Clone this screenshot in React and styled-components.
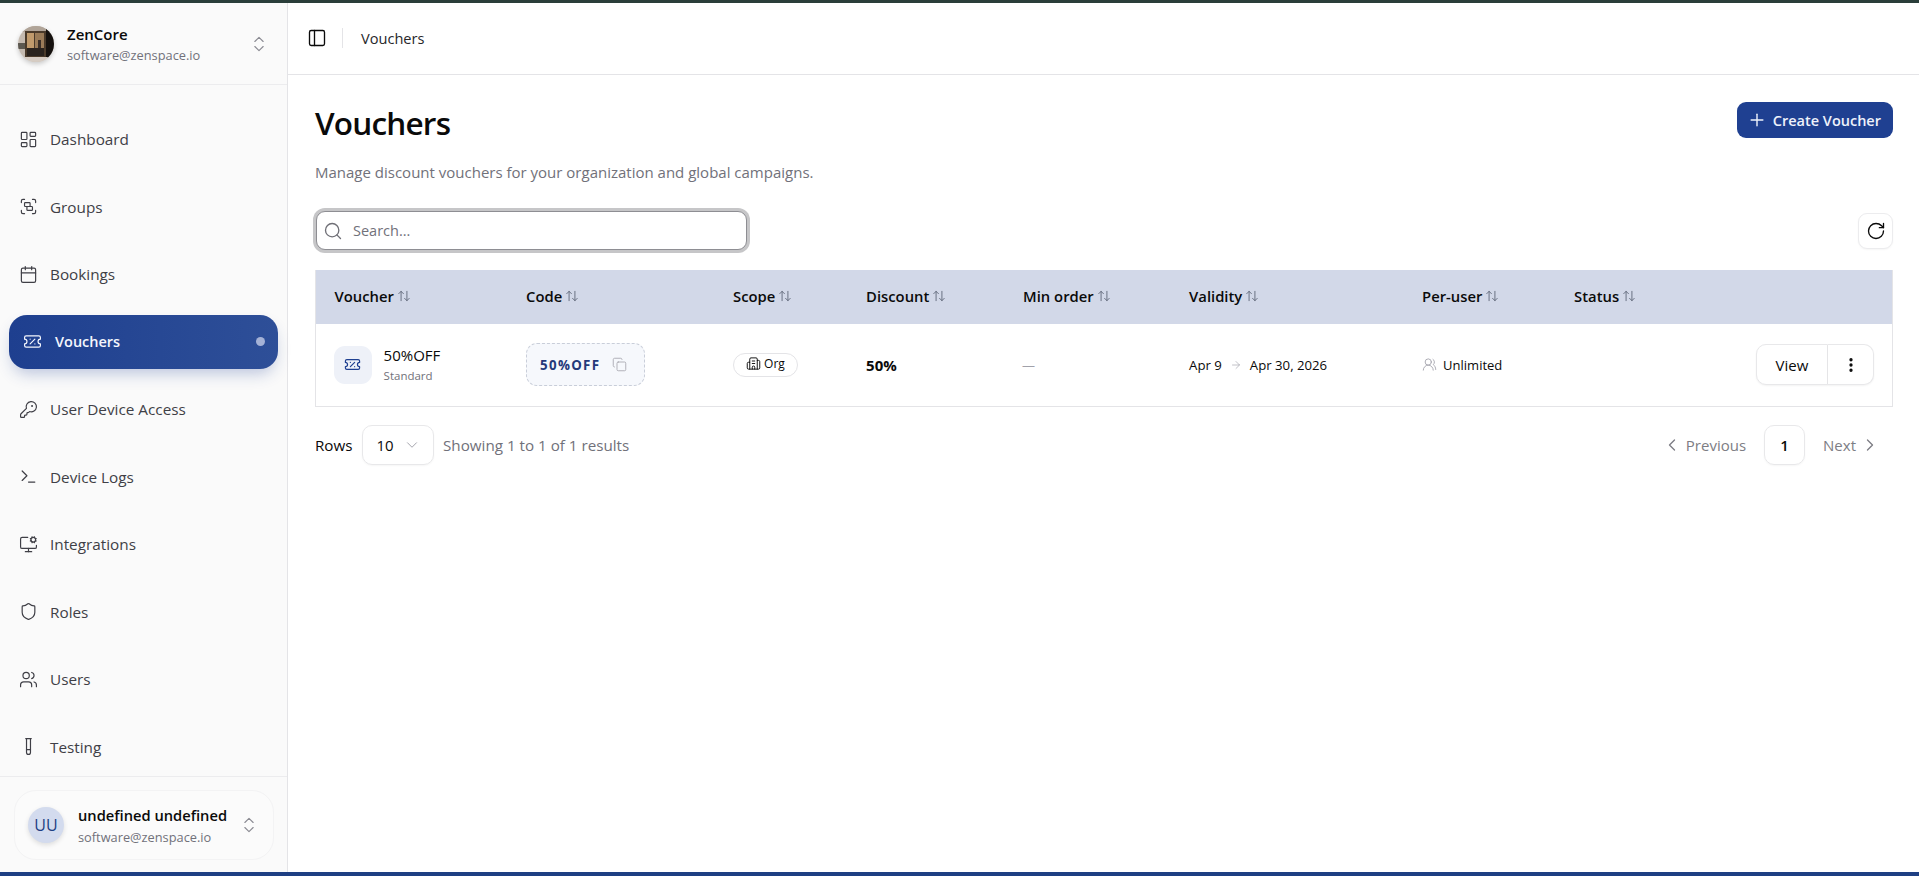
import React from "react";
import styled, { createGlobalStyle } from "styled-components";
import {
  LayoutDashboard,
  Group,
  Calendar,
  TicketPercent,
  KeyRound,
  Terminal,
  MonitorCog,
  Shield,
  Users,
  UsersRound,
  TestTube,
  ChevronsUpDown,
  ChevronDown,
  ChevronLeft,
  ChevronRight,
  PanelLeft,
  Plus,
  Search,
  RotateCw,
  ArrowUpDown,
  Copy,
  Building2,
  ArrowRight,
  EllipsisVertical,
} from "lucide-react";

const GlobalStyle = createGlobalStyle`
  * { box-sizing: border-box; }
  html, body { margin: 0; height: 100%; }
  body {
    font-family: "Open Sans", "Noto Sans", "Liberation Sans", sans-serif;
    color: #0a0a0a;
    background: #fff;
  }
`;

const navItems = [
  { label: "Dashboard", icon: LayoutDashboard },
  { label: "Groups", icon: Group },
  { label: "Bookings", icon: Calendar },
  { label: "Vouchers", icon: TicketPercent, active: true },
  { label: "User Device Access", icon: KeyRound },
  { label: "Device Logs", icon: Terminal },
  { label: "Integrations", icon: MonitorCog },
  { label: "Roles", icon: Shield },
  { label: "Users", icon: Users },
  { label: "Testing", icon: TestTube },
];

const columns = ["Voucher", "Code", "Scope", "Discount", "Min order", "Validity", "Per-user", "Status"];
const colWidths = [192, 207, 133, 157, 166, 233, 152];

const TeamAvatar = () => (
  <AvatarSvg viewBox="0 0 36 36">
    <rect width="36" height="36" fill="#c4bab0" />
    <rect x="0" y="0" width="36" height="6" fill="#b0a498" />
    <rect x="0" y="17" width="7" height="6" fill="#5c5850" />
    <rect x="7" y="5" width="21" height="26" fill="#4a3a2a" />
    <rect x="9" y="7" width="7" height="15" fill="#c09a6c" />
    <rect x="17" y="7" width="9" height="15" fill="#9a7b58" />
    <rect x="20" y="14" width="3" height="8" fill="#3a2f28" />
    <rect x="9" y="22" width="17" height="8" fill="#2a231e" />
    <rect x="28" y="3" width="8" height="29" fill="#15110e" />
    <rect x="0" y="31" width="36" height="5" fill="#d6ccc3" />
  </AvatarSvg>
);

export default function App() {
  return (
    <>
      <GlobalStyle />
      <Page>
        <TopStrip />
        <Body>
          <Sidebar>
            <TeamRow>
              <TeamAvatar />
              <TeamText>
                <TeamName>ZenCore</TeamName>
                <Email>software@zenspace.io</Email>
              </TeamText>
              <Updown><ChevronsUpDown size={20} strokeWidth={1.3} /></Updown>
            </TeamRow>
            <Nav>
              {navItems.map(({ label, icon: Icon, active }) => (
                <NavItem key={label} $active={active}>
                  <Icon size={19} strokeWidth={1.5} />
                  <span>{label}</span>
                  {active && <ActiveDot />}
                </NavItem>
              ))}
            </Nav>
            <SidebarFooter>
              <UserCard>
                <UserAvatar>UU</UserAvatar>
                <TeamText>
                  <UserName>undefined undefined</UserName>
                  <Email>software@zenspace.io</Email>
                </TeamText>
                <Updown><ChevronsUpDown size={20} strokeWidth={1.3} /></Updown>
              </UserCard>
            </SidebarFooter>
          </Sidebar>
          <Main>
            <Header>
              <PanelLeft size={20} strokeWidth={1.6} />
              <HeaderDivider />
              <Crumb>Vouchers</Crumb>
            </Header>
            <Content>
              <TitleRow>
                <Title>Vouchers</Title>
                <CreateButton>
                  <Plus size={20} strokeWidth={1.7} />
                  Create Voucher
                </CreateButton>
              </TitleRow>
              <Subtitle>Manage discount vouchers for your organization and global campaigns.</Subtitle>
              <Toolbar>
                <SearchBox>
                  <Search size={20} strokeWidth={1.6} />
                  <SearchInput placeholder="Search..." />
                </SearchBox>
                <RefreshButton><RotateCw size={20} strokeWidth={1.6} /></RefreshButton>
              </Toolbar>
              <Table>
                <colgroup>
                  {colWidths.map((w, i) => <col key={i} width={w} />)}
                  <col />
                  <col width={140} />
                </colgroup>
                <thead>
                  <tr>
                    {columns.map((c) => (
                      <Th key={c}>
                        <ThInner>
                          {c}
                          <ArrowUpDown size={14} strokeWidth={1.5} />
                        </ThInner>
                      </Th>
                    ))}
                    <Th />
                  </tr>
                </thead>
                <tbody>
                  <tr>
                    <Td>
                      <VoucherCell>
                        <VoucherIcon><TicketPercent size={17} strokeWidth={1.7} /></VoucherIcon>
                        <div>
                          <VoucherName>50%OFF</VoucherName>
                          <VoucherType>Standard</VoucherType>
                        </div>
                      </VoucherCell>
                    </Td>
                    <Td>
                      <CodeChip>
                        50%OFF
                        <Copy size={15} strokeWidth={1.3} />
                      </CodeChip>
                    </Td>
                    <Td>
                      <ScopeChip><Building2 size={15} strokeWidth={1.5} />Org</ScopeChip>
                    </Td>
                    <Td><Discount>50%</Discount></Td>
                    <Td><Dash>—</Dash></Td>
                    <Td>
                      <Validity>
                        Apr 9
                        <ArrowRight size={12} strokeWidth={1.3} />
                        Apr 30, 2026
                      </Validity>
                    </Td>
                    <Td>
                      <PerUser><UsersRound size={15} strokeWidth={1.4} />Unlimited</PerUser>
                    </Td>
                    <Td />
                    <ActionTd>
                      <ActionGroup>
                        <ViewButton>View</ViewButton>
                        <MoreButton><EllipsisVertical size={18} strokeWidth={2.4} /></MoreButton>
                      </ActionGroup>
                    </ActionTd>
                  </tr>
                </tbody>
              </Table>
              <Footer>
                <FooterLeft>
                  <RowsLabel>Rows</RowsLabel>
                  <RowsSelect>10<ChevronDown size={18} strokeWidth={1.3} /></RowsSelect>
                  <Showing>Showing 1 to 1 of 1 results</Showing>
                </FooterLeft>
                <Pager>
                  <PagerLink><ChevronLeft size={20} strokeWidth={1.6} />Previous</PagerLink>
                  <PageNumber>1</PageNumber>
                  <PagerLink>Next<ChevronRight size={20} strokeWidth={1.6} /></PagerLink>
                </Pager>
              </Footer>
            </Content>
          </Main>
        </Body>
        <BottomStrip />
      </Page>
    </>
  );
}

const Page = styled.div`
  height: 876px;
  width: 100%;
  display: flex;
  flex-direction: column;
  overflow: hidden;
`;

const TopStrip = styled.div`
  height: 3px;
  background: #2a3e3a;
  flex: none;
`;

const BottomStrip = styled.div`
  height: 4px;
  background: #1e3f83;
  flex: none;
`;

const Body = styled.div`
  flex: 1;
  display: flex;
  min-height: 0;
`;

const Sidebar = styled.aside`
  width: 288px;
  flex: none;
  background: #fafafa;
  border-right: 1px solid #e4e4e7;
  display: flex;
  flex-direction: column;
`;

const TeamRow = styled.div`
  height: 82px;
  flex: none;
  border-bottom: 1px solid #ececee;
  display: flex;
  align-items: center;
  gap: 13px;
  padding: 0 18px 0 18px;
`;

const AvatarSvg = styled.svg`
  width: 36px;
  height: 36px;
  border-radius: 50%;
  flex: none;
  box-shadow: 0 2px 5px rgba(0, 0, 0, 0.2);
`;

const TeamText = styled.div`
  flex: 1;
  min-width: 0;
  display: flex;
  flex-direction: column;
  gap: 2px;
`;

const TeamName = styled.div`
  font-size: 15px;
  font-weight: 600;
  line-height: 20px;
`;

const UserName = styled.div`
  font-size: 14.7px;
  font-weight: 600;
  line-height: 21px;
  white-space: nowrap;
`;

const Email = styled.div`
  font-size: 12.8px;
  line-height: 18px;
  color: #71717a;
`;

const Updown = styled.span`
  display: flex;
  color: #8a8a92;
`;

const Nav = styled.nav`
  flex: 1;
  display: flex;
  flex-direction: column;
  gap: 13.5px;
  padding: 27px 9px 0;
`;

const NavItem = styled.a`
  height: 54px;
  flex: none;
  display: flex;
  align-items: center;
  gap: ${(p) => (p.$active ? "13.5px" : "12.5px")};
  padding: 0 ${(p) => (p.$active ? "13.5px" : "9.5px")};
  border-radius: 18px;
  font-size: ${(p) => (p.$active ? "14.5px" : "15.3px")};
  font-weight: ${(p) => (p.$active ? 600 : 500)};
  color: ${(p) => (p.$active ? "#f4f6fd" : "#3f3f46")};
  background: ${(p) => (p.$active ? "linear-gradient(90deg, #1e3f8f, #2e4f98)" : "transparent")};
  box-shadow: ${(p) => (p.$active ? "0 8px 16px -4px rgba(30, 64, 150, 0.3)" : "none")};
  span { flex: 1; }
`;

const ActiveDot = styled.i`
  width: 9px;
  height: 9px;
  border-radius: 50%;
  background: #a5b2d6;
`;

const SidebarFooter = styled.div`
  height: 96px;
  flex: none;
  border-top: 1px solid #ececee;
  padding: 13px 13px 0 14px;
`;

const UserCard = styled.div`
  height: 70px;
  border: 1px solid #f3f3f4;
  border-radius: 22px;
  background: #fbfbfb;
  display: flex;
  align-items: center;
  gap: 14px;
  padding: 0 14px 0 13px;
`;

const UserAvatar = styled.div`
  width: 36px;
  height: 36px;
  flex: none;
  border-radius: 50%;
  background: #d3dbee;
  color: #1e3f83;
  font-size: 16px;
  font-weight: 500;
  display: flex;
  align-items: center;
  justify-content: center;
  box-shadow: 0 2px 5px rgba(0, 0, 0, 0.12);
`;

const Main = styled.main`
  flex: 1;
  min-width: 0;
  display: flex;
  flex-direction: column;
`;

const Header = styled.header`
  height: 72px;
  flex: none;
  border-bottom: 1px solid #e4e4e7;
  display: flex;
  align-items: center;
  padding: 0 19px 2px;
`;

const HeaderDivider = styled.div`
  width: 1px;
  height: 20px;
  background: #e4e4e7;
  margin: 0 18px 0 15px;
`;

const Crumb = styled.div`
  font-size: 14.6px;
  color: #27272a;
`;

const Content = styled.div`
  padding: 25px 26px 0 27px;
`;

const TitleRow = styled.div`
  display: flex;
  justify-content: space-between;
  align-items: flex-start;
`;

const Title = styled.h1`
  margin: 0;
  font-size: 31.5px;
  font-weight: 600;
  line-height: 46px;
  letter-spacing: -0.8px;
`;

const CreateButton = styled.button`
  height: 36px;
  margin-top: 2px;
  border: 0;
  border-radius: 9px;
  background: #1f4091;
  color: #eef2fb;
  font: 600 14.5px "Open Sans", sans-serif;
  display: flex;
  align-items: center;
  gap: 6px;
  padding: 0 12px 0 10px;
`;

const Subtitle = styled.p`
  margin: 14px 0 0;
  font-size: 15px;
  line-height: 24px;
  color: #71717a;
`;

const Toolbar = styled.div`
  display: flex;
  justify-content: space-between;
  align-items: center;
  margin-top: 27px;
`;

const SearchBox = styled.div`
  width: 431px;
  height: 39px;
  margin-left: 1px;
  border: 1px solid #8e8e93;
  border-radius: 9px;
  box-shadow: 0 0 0 3px #c6c6c8;
  background: #fff;
  display: flex;
  align-items: center;
  gap: 10px;
  padding: 0 6px;
  color: #6f6f76;
`;

const SearchInput = styled.input`
  flex: 1;
  border: 0;
  outline: 0;
  padding: 0;
  background: transparent;
  font: 14.5px "Open Sans", sans-serif;
  &::placeholder { color: #71717a; opacity: 1; }
`;

const RefreshButton = styled.button`
  width: 35px;
  height: 36px;
  border: 1px solid #ececee;
  border-radius: 9px;
  background: #fff;
  color: #0a0a0a;
  display: flex;
  align-items: center;
  justify-content: center;
  padding: 0;
  box-shadow: 0 1px 2px rgba(0, 0, 0, 0.04);
`;

const Table = styled.table`
  width: 100%;
  table-layout: fixed;
  border-collapse: collapse;
  margin-top: 20px;
  border: 1px solid #e4e4e7;
  border-top: 0;
`;

const Th = styled.th`
  height: 54px;
  padding: 0 0 2px 18.6px;
  background: #d2d8e8;
  text-align: left;
  font-size: 14.8px;
  font-weight: 600;
  white-space: nowrap;
`;

const ThInner = styled.span`
  display: inline-flex;
  align-items: center;
  gap: 3px;
  svg { color: #5b6375; }
`;

const Td = styled.td`
  height: 82px;
  padding: 0 0 0 18.6px;
  vertical-align: middle;
  white-space: nowrap;
`;

const ActionTd = styled(Td)`
  padding: 0 18px 0 0;
`;

const VoucherCell = styled.div`
  display: flex;
  align-items: center;
  gap: 12px;
  margin-left: -1px;
`;

const VoucherIcon = styled.div`
  width: 38px;
  height: 38px;
  border-radius: 11px;
  background: #eef1f8;
  color: #1f4091;
  display: flex;
  align-items: center;
  justify-content: center;
`;

const VoucherName = styled.div`
  font-size: 15px;
  font-weight: 500;
  line-height: 20px;
`;

const VoucherType = styled.div`
  font-size: 11.5px;
  line-height: 17px;
  margin-top: 2px;
  color: #71717a;
`;

const CodeChip = styled.div`
  display: inline-flex;
  align-items: center;
  gap: 12px;
  height: 43px;
  padding: 0 17px 0 13px;
  border: 1px dashed #c9ced9;
  border-radius: 11px;
  background: #f6f8fc;
  color: #24397a;
  font-size: 13.3px;
  font-weight: 700;
  letter-spacing: 1.3px;
  svg { color: #a1a1aa; }
`;

const ScopeChip = styled.div`
  display: inline-flex;
  align-items: center;
  gap: 3px;
  height: 24px;
  padding: 0 12px 2px;
  border: 1px solid #e4e4e7;
  border-radius: 12px;
  font-size: 12px;
  font-weight: 500;
`;

const Discount = styled.div`
  font-size: 15px;
  font-weight: 700;
`;

const Dash = styled.div`
  font-size: 13px;
  color: #a1a1aa;
  margin-left: -1px;
`;

const Validity = styled.div`
  display: flex;
  align-items: center;
  gap: 8px;
  font-size: 13.2px;
  font-weight: 500;
  svg { color: #a1a1aa; }
`;

const PerUser = styled.div`
  display: flex;
  align-items: center;
  gap: 6px;
  font-size: 13px;
  svg { color: #a1a1aa; }
`;

const ActionGroup = styled.div`
  display: flex;
  justify-content: flex-end;
`;

const ViewButton = styled.button`
  width: 72px;
  height: 41px;
  border: 1px solid #e8e8ea;
  border-radius: 10px 0 0 10px;
  background: #fff;
  color: #0a0a0a;
  font: 500 15px "Open Sans", sans-serif;
  box-shadow: 0 1px 2px rgba(0, 0, 0, 0.05);
`;

const MoreButton = styled.button`
  width: 46px;
  height: 41px;
  border: 1px solid #e8e8ea;
  border-left: 0;
  border-radius: 0 10px 10px 0;
  background: #fff;
  color: #0a0a0a;
  display: flex;
  align-items: center;
  justify-content: center;
  padding: 0;
  box-shadow: 0 1px 2px rgba(0, 0, 0, 0.05);
`;

const Footer = styled.div`
  display: flex;
  justify-content: space-between;
  align-items: center;
  margin-top: 18px;
`;

const FooterLeft = styled.div`
  display: flex;
  align-items: center;
`;

const RowsLabel = styled.span`
  font-size: 15.2px;
  font-weight: 500;
  margin-right: 9px;
`;

const RowsSelect = styled.div`
  width: 72px;
  height: 40px;
  border: 1px solid #e8e8ea;
  border-radius: 10px;
  display: flex;
  align-items: center;
  justify-content: space-between;
  padding: 0 12px 0 14px;
  font-size: 15px;
  box-shadow: 0 1px 2px rgba(0, 0, 0, 0.04);
  svg { color: #a1a1aa; }
`;

const Showing = styled.span`
  font-size: 15.2px;
  color: #71717a;
  margin-left: 9.5px;
`;

const Pager = styled.div`
  display: flex;
  align-items: center;
  gap: 18px;
  padding-right: 13px;
`;

const PagerLink = styled.span`
  display: inline-flex;
  align-items: center;
  gap: 4px;
  font-size: 15px;
  font-weight: 500;
  color: #7d7d84;
`;

const PageNumber = styled.span`
  width: 41px;
  height: 40px;
  border: 1px solid #e8e8ea;
  border-radius: 10px;
  display: flex;
  align-items: center;
  justify-content: center;
  font-size: 15px;
  font-weight: 600;
  box-shadow: 0 1px 2px rgba(0, 0, 0, 0.04);
`;
